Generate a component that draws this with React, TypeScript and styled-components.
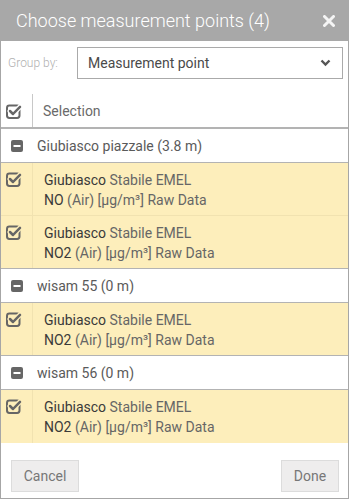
import React from "react";
import styled, { createGlobalStyle } from "styled-components";

const Global = createGlobalStyle`
  html, body { margin: 0; padding: 0; background: #fff; }
  body { font-family: Roboto, "Liberation Sans", Arial, sans-serif; }
  * { box-sizing: border-box; }
`;

const Dialog = styled.div`
  width: 349px;
  height: 499px;
  border: 1px solid #a6a6a6;
  border-top: none;
  display: flex;
  flex-direction: column;
  background: #fff;
`;

const Header = styled.div`
  height: 41px;
  background: #a8a8a8;
  margin: 0 -1px;
  padding: 0 16px;
  display: flex;
  align-items: center;
  justify-content: space-between;
  flex-shrink: 0;
`;

const Title = styled.div`
  color: #fff;
  font-size: 18px;
  font-weight: 300;
`;

const Close = styled.button`
  border: none;
  background: transparent;
  padding: 0;
  margin-right: -2px;
  width: 12px;
  height: 12px;
  display: flex;
  cursor: pointer;
`;

const GroupBar = styled.div`
  height: 53px;
  display: flex;
  align-items: flex-start;
  padding: 6px 5px 0 7px;
`;

const GroupLabel = styled.div`
  width: 69px;
  font-size: 12px;
  color: #b0b0b0;
  font-weight: 300;
  line-height: 32px;
`;

const Select = styled.div`
  flex: 1;
  height: 32px;
  border: 1px solid #aaa;
  display: flex;
  align-items: center;
  justify-content: space-between;
  padding: 0 11px 0 10px;
  font-size: 14px;
  color: #4a4a4a;
`;

const Row = styled.div<{ $variant: "head" | "group" | "item" }>`
  display: flex;
  align-items: stretch;
  background: ${(p) => (p.$variant === "item" ? "#fdeebb" : "#fff")};
  height: ${(p) => (p.$variant === "item" ? "53px" : p.$variant === "head" ? "35px" : "34px")};
  border-bottom: 1px solid
    ${(p) => (p.$variant === "item" ? "#f1e2b0" : "#b3b3b3")};
  ${(p) => (p.$variant === "head" ? "border-bottom: 2px solid #b3b3b3;" : "")}
  &.last { border-bottom-color: #b3b3b3; }
  &.end { border-bottom: none; }
`;

const CheckCell = styled.div<{ $light?: boolean }>`
  width: 32px;
  flex-shrink: 0;
  border-right: 1px solid ${(p) => (p.$light ? "#f1e2b0" : "#c8c8c8")};
  display: flex;
  justify-content: flex-start;
  padding-top: 8px;
  padding-left: 5px;
`;

const HeadCheckCell = styled(CheckCell)`
  align-items: center;
  padding-top: 0;
`;

const HeadText = styled.div`
  display: flex;
  align-items: center;
  padding-left: 10px;
  font-size: 14px;
  color: #6a6a6a;
`;

const GroupIcon = styled.div`
  width: 36px;
  display: flex;
  align-items: center;
  padding-left: 10px;
`;

const GroupText = styled.div`
  display: flex;
  align-items: center;
  font-size: 14px;
  color: #5a5a5a;
`;

const ItemText = styled.div`
  padding: 7px 0 0 11px;
  font-size: 14px;
  line-height: 20px;
  color: #666;
`;

const Strong = styled.span`
  color: #3a3a3a;
`;

const Spacer = styled.div`
  flex: 1;
`;

const Footer = styled.div`
  display: flex;
  justify-content: space-between;
  padding: 0 9px 6px 10px;
`;

const Button = styled.button<{ $w: number }>`
  width: ${(p) => p.$w}px;
  height: 32px;
  background: #eeeded;
  border: 1px solid #dcdcdc;
  color: #777;
  font-family: inherit;
  font-size: 14px;
  padding: 0;
`;

const CheckIcon = ({ bg }: { bg: string }) => (
  <svg width="16" height="16" viewBox="0 0 16 16">
    <rect x="1" y="2.5" width="12.5" height="12.5" rx="2.4" fill="none" stroke="#666" strokeWidth="2" />
    <path d="M4 8 L7 11 L14 3.8" fill="none" stroke={bg} strokeWidth="5" strokeLinecap="round" strokeLinejoin="round" />
    <path d="M4 8 L7 11 L14 3.8" fill="none" stroke="#666" strokeWidth="2.5" strokeLinecap="round" strokeLinejoin="round" />
  </svg>
);

const MinusIcon = () => (
  <svg width="12" height="12" viewBox="0 0 12 12">
    <rect x="0" y="0" width="12" height="12" rx="2" fill="#666" />
    <rect x="2.5" y="5" width="7" height="2" fill="#fff" />
  </svg>
);

const Chevron = () => (
  <svg width="11" height="8" viewBox="0 0 11 8">
    <path d="M1.5 1.5 L5.5 5.5 L9.5 1.5" fill="none" stroke="#555" strokeWidth="2.4" />
  </svg>
);

const CloseIcon = () => (
  <svg width="12" height="12" viewBox="0 0 12 12">
    <path d="M1.5 1.5 L10.5 10.5 M10.5 1.5 L1.5 10.5" stroke="#f4f4f4" strokeWidth="3" strokeLinecap="round" />
  </svg>
);

type Item = { param: string };
type Group = { name: string; items: Item[] };

const groups: Group[] = [
  { name: "Giubiasco piazzale (3.8 m)", items: [{ param: "NO" }, { param: "NO2" }] },
  { name: "wisam 55 (0 m)", items: [{ param: "NO2" }] },
  { name: "wisam 56 (0 m)", items: [{ param: "NO2" }] },
];

export default function App() {
  return (
    <>
      <Global />
      <Dialog>
        <Header>
          <Title>Choose measurement points (4)</Title>
          <Close aria-label="close">
            <CloseIcon />
          </Close>
        </Header>
        <GroupBar>
          <GroupLabel>Group by:</GroupLabel>
          <Select>
            <span>Measurement point</span>
            <Chevron />
          </Select>
        </GroupBar>
        <Row $variant="head">
          <HeadCheckCell>
            <CheckIcon bg="#fff" />
          </HeadCheckCell>
          <HeadText>Selection</HeadText>
        </Row>
        {groups.map((g, gi) => (
          <React.Fragment key={g.name}>
            <Row $variant="group">
              <GroupIcon>
                <MinusIcon />
              </GroupIcon>
              <GroupText>{g.name}</GroupText>
            </Row>
            {g.items.map((it, ii) => {
              const isLast = ii === g.items.length - 1;
              const isEnd = isLast && gi === groups.length - 1;
              return (
                <Row
                  key={ii}
                  $variant="item"
                  className={isEnd ? "end" : isLast ? "last" : undefined}
                >
                  <CheckCell $light>
                    <CheckIcon bg="#fdeebb" />
                  </CheckCell>
                  <ItemText>
                    <div>
                      <Strong>Giubiasco</Strong> Stabile EMEL
                    </div>
                    <div>
                      <Strong>{it.param}</Strong> (Air) [µg/m³] Raw Data
                    </div>
                  </ItemText>
                </Row>
              );
            })}
          </React.Fragment>
        ))}
        <Spacer />
        <Footer>
          <Button $w={68}>Cancel</Button>
          <Button $w={58}>Done</Button>
        </Footer>
      </Dialog>
    </>
  );
}
